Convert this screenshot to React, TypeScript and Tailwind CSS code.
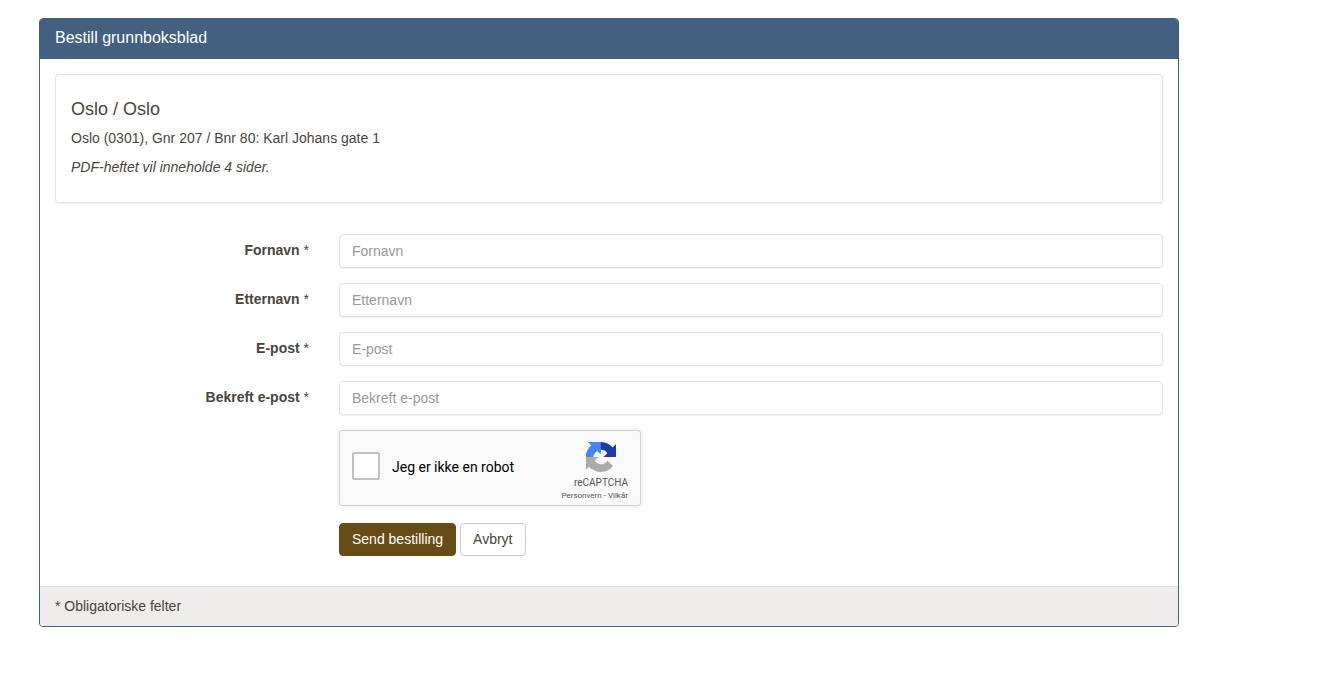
const fields = [
  { label: 'Fornavn' },
  { label: 'Etternavn' },
  { label: 'E-post' },
  { label: 'Bekreft e-post' },
]

function RecaptchaLogo() {
  return (
    <svg viewBox="0 0 64 64" className="w-[30px] h-[30px]">
      <path d="M64 32c0-.46-.012-.92-.032-1.376V4.6l-7.196 7.196C50.884 4.588 41.97 0 31.98 0 21.586 0 12.35 4.968 6.512 12.66l11.796 11.92c1.156-2.138 2.798-3.974 4.788-5.36 2.06-1.608 4.98-2.922 9.082-2.922.496 0 .878.058 1.16.166 5.082.402 9.488 3.206 12.082 7.276l-8.35 8.35c10.576-.042 22.524-.066 26.93.004" fill="#1c3aa9" />
      <path d="M31.592 0c-.46 0-.92.012-1.376.032H4.192l7.196 7.196C4.18 13.116-.408 22.03-.408 32.02c0 10.394 4.968 19.63 12.66 25.468l11.92-11.796c-2.138-1.156-3.974-2.798-5.36-4.788-1.608-2.06-2.922-4.98-2.922-9.082 0-.496.058-.878.166-1.16.402-5.082 3.206-9.488 7.276-12.082l8.35 8.35c-.042-10.576-.066-22.524.004-26.93" fill="#4285f4" />
      <path d="M.002 32c0 .46.012.92.032 1.376V59.4l7.196-7.196C13.118 59.412 22.032 64 32.022 64c10.394 0 19.63-4.968 25.468-12.66l-11.796-11.92c-1.156 2.138-2.798 3.974-4.788 5.36-2.06 1.608-4.98 2.922-9.082 2.922-.496 0-.878-.058-1.16-.166-5.082-.402-9.488-3.206-12.082-7.276l8.35-8.35c-10.576.042-22.524.066-26.93-.004" fill="#ababab" />
    </svg>
  )
}

export default function App() {
  return (
    <div className="min-h-[673px] bg-white pt-[18px] pl-[39px] font-['Liberation_Sans',Arial,sans-serif] text-[14px] leading-[20px] text-[#4a453c]">
      <div className="w-[1140px] rounded-[4px] border border-[#426080] bg-white">
        <div className="h-[40px] rounded-t-[3px] bg-[#426080] px-[15px] pt-[10px] text-[16px] leading-[18px] text-white">
          Bestill grunnboksblad
        </div>

        <div className="px-[15px] pt-[15px] pb-[30px]">
          <div className="h-[129px] rounded-[4px] border border-[#e3e3e3] bg-white pl-[15px] pr-[15px] pt-[24px] shadow-[0_1px_2px_rgba(0,0,0,0.08)]">
            <h4 className="text-[18px] leading-[20px]">Oslo / Oslo</h4>
            <p className="mt-[9px]">Oslo (0301), Gnr 207 / Bnr 80: Karl Johans gate 1</p>
            <p className="mt-[9px] italic">PDF-heftet vil inneholde 4 sider.</p>
          </div>

          <form className="mt-[31px] flex flex-col gap-[15px]">
            {fields.map((field) => (
              <div key={field.label} className="flex gap-[30px]">
                <label className="w-[254px] pt-[6px] text-right">
                  <span className="font-bold">{field.label}</span> *
                </label>
                <input
                  type="text"
                  placeholder={field.label}
                  className="h-[34px] w-[824px] rounded-[4px] border border-[#e2e2e2] bg-white px-[12px] py-[6px] shadow-[0_1px_1px_rgba(0,0,0,0.05)] placeholder:text-[#999]"
                />
              </div>
            ))}

            <div className="pl-[284px]">
              <div className="flex h-[76px] w-[302px] rounded-[3px] border border-[#d3d3d3] bg-[#f9f9f9] shadow-[0_0_4px_1px_rgba(0,0,0,0.08)]">
                <div className="mt-[21px] ml-[12px] h-[28px] w-[28px] rounded-[2px] border-2 border-[#c1c1c1] bg-white" />
                <div className="mt-[26px] ml-[12px] font-['Roboto',Arial,sans-serif] text-[14px] leading-[20px] text-black">
                  Jeg er ikke en robot
                </div>
                <div className="ml-auto mr-[12px] flex flex-col items-end pt-[11px] font-['Roboto',Arial,sans-serif] text-[#555]">
                  <div className="mr-[12px]">
                    <RecaptchaLogo />
                  </div>
                  <div className="mt-[5px] text-[10px] leading-[12px]">reCAPTCHA</div>
                  <div className="mt-[1px] text-[8px] leading-[12px]">Personvern - Vilkår</div>
                </div>
              </div>
            </div>

            <div className="mt-[2px] flex gap-[4px] pl-[284px]">
              <button type="button" className="h-[33px] rounded-[4px] border border-[#674c16] bg-[#674c16] px-[12px] pb-[2px] text-white">
                Send bestilling
              </button>
              <button type="button" className="h-[33px] rounded-[4px] border border-[#ccc] bg-white px-[12px] pb-[2px]">
                Avbryt
              </button>
            </div>
          </form>
        </div>

        <div className="h-[40px] rounded-b-[3px] border-t border-[#ddd] bg-[#eeedeb] px-[15px] pt-[9px]">
          * Obligatoriske felter
        </div>
      </div>
    </div>
  )
}
